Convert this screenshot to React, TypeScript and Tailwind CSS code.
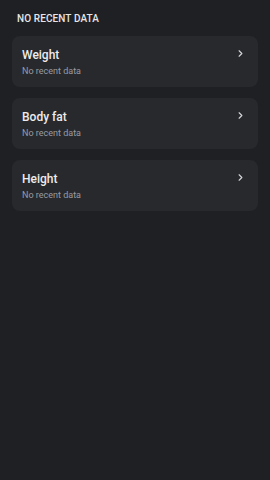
import { ChevronRight } from "lucide-react";
import React from "react";

const items = ["Weight", "Body fat", "Height"];

export default function App() {
  return (
    <div
      className="w-[270px] h-[480px] bg-[#1f2023] pt-[12px] px-[12px]"
      style={{ fontFamily: "Roboto, 'Noto Sans', sans-serif" }}
    >
      <div className="pl-[5px] text-[10px] font-medium leading-[14px] text-[#e6e6e8] tracking-[0.1px]">
        NO RECENT DATA
      </div>
      <div className="mt-[10px] flex flex-col gap-[11px]">
        {items.map((name) => (
          <div
            key={name}
            className="h-[51px] rounded-[8px] bg-[#28292d] pl-[10px] pr-[12px] pt-[11px] flex justify-between"
          >
            <div className="flex flex-col">
              <span className="text-[12px] font-medium leading-[16px] text-[#ececee]">
                {name}
              </span>
              <span className="text-[9px] leading-[12px] mt-[2px] text-[#9a9ba0]">
                No recent data
              </span>
            </div>
            <ChevronRight className="w-[11px] h-[11px] mt-[1px] text-[#d4d5d8]" strokeWidth={2.5} />
          </div>
        ))}
      </div>
    </div>
  );
}
